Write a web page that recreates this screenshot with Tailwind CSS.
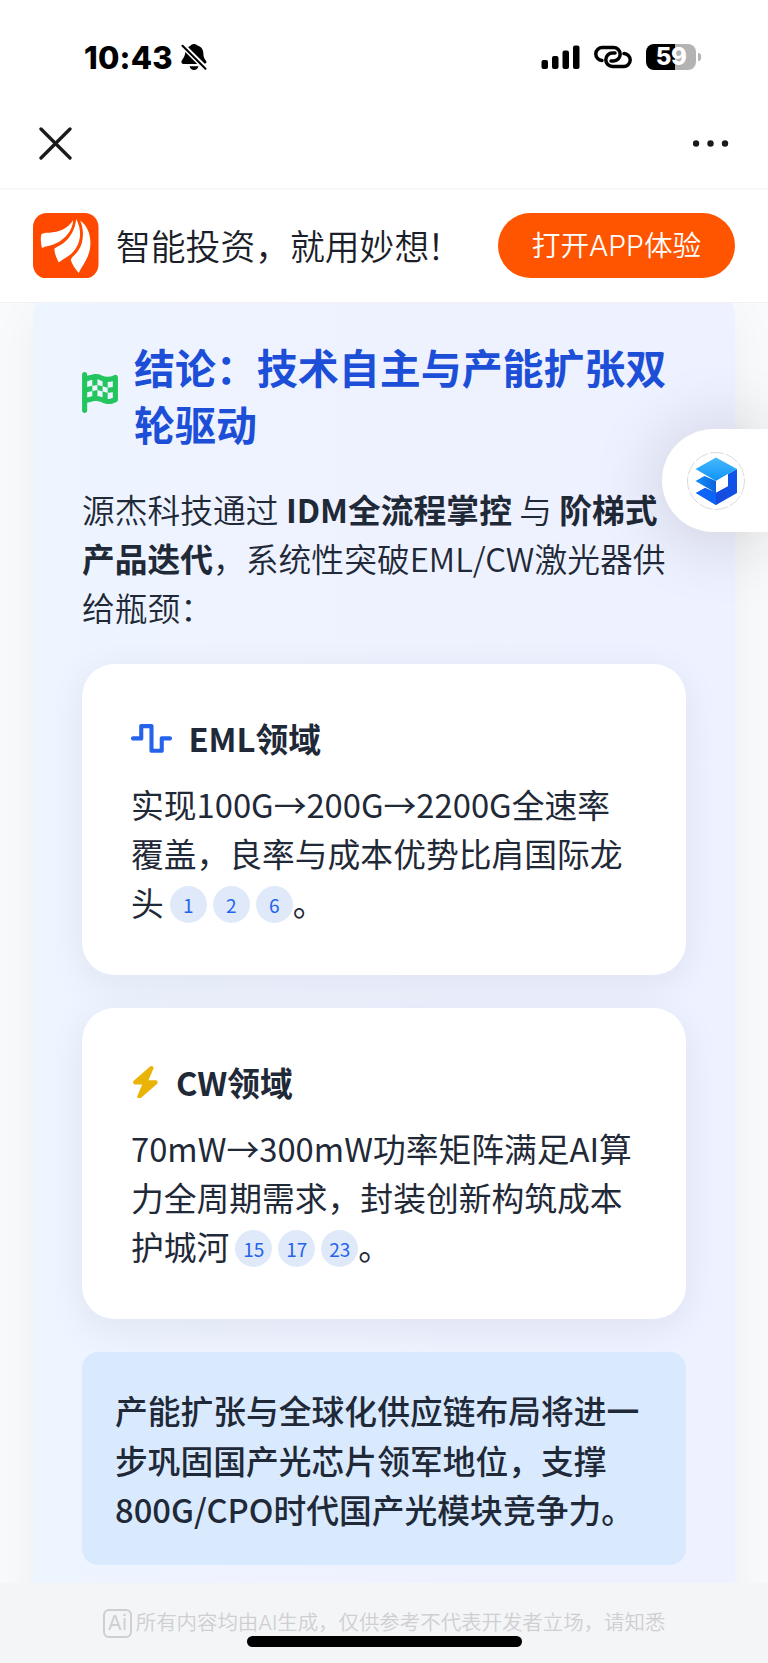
<!DOCTYPE html>
<html lang="zh-CN">
<head>
<meta charset="utf-8">
<title>结论</title>
<script src="https://cdn.jsdelivr.net/npm/@tailwindcss/browser@4"></script>
</head>
<body class="bg-[#f4f5f7] font-['Noto_Sans_CJK_SC',sans-serif] text-[#1f2937]">
<div class="relative flex h-[1663px] w-[768px] flex-col overflow-hidden">

  <!-- status bar -->
  <div class="flex h-[114px] shrink-0 items-center justify-between bg-white pr-[67px] pl-[84px]">
    <div class="flex items-center gap-[8px] text-black">
      <span class="pt-px font-['Inter',sans-serif] text-[31px] leading-none font-extrabold tracking-[0.200px]">10:43</span>
      <svg class="h-[26px] w-[26px]" viewBox="0 0 26 26" fill="#000">
        <path d="M13 0c-1.800 0-2.800.9-3.200 1.600-1 .3-1.900.9-2.600 1.700L23.500 19.600c1.200 0 1.900-.6 1.900-1.600 0-1.800-3-3-3-8 0-4-1.900-7.300-6-8.400C15.900.8 14.800 0 13 0z"/>
        <path d="M4.300 8.100C4.100 13.500.4 15.800.4 18.100c0 1.300.9 2 2.200 2h13.600z"/>
        <path d="M8.500 22.300h9c-.6 2.200-2.200 3.700-4.500 3.700s-3.900-1.500-4.500-3.700z"/>
        <path d="M1.500 1.800l23 23" stroke="#000" stroke-width="2" stroke-linecap="round"/>
      </svg>
    </div>
    <div class="flex items-center">
      <svg class="h-[24px] w-[39px]" viewBox="0 0 39 24">
        <rect x="0.500" y="15" width="6.500" height="9" rx="2"/><rect x="11" y="11" width="6.500" height="13" rx="2"/><rect x="21.500" y="5.500" width="6.500" height="18.500" rx="2"/><rect x="32" y="0.500" width="6.500" height="23.500" rx="2"/>
      </svg>
      <svg class="ml-[14px] h-[24px] w-[38px]" viewBox="0 0 38 24" fill="none" stroke="#000" stroke-width="3.500" stroke-linecap="round">
        <path d="M8 15.500A6.400 6.400 0 0 1 8.500 2.600H19.500a6.700 6.700 0 0 1 0 13.400h-2.500"/>
        <path d="M30 8.600a6.400 6.400 0 0 1-.5 12.900H18.500a6.700 6.700 0 0 1 0-13.400h2.500"/>
      </svg>
      <div class="ml-[14px] flex h-[26px] w-[50px] items-center justify-center rounded-[8px] bg-linear-to-r from-black from-58% to-[#b3b3b3] to-58% font-['Inter',sans-serif] text-[24px] leading-none font-extrabold tracking-[-0.500px] text-white">59</div>
      <div class="ml-[2px] h-[8px] w-[3px] rounded-r-full bg-[#b3b3b3]"></div>
    </div>
  </div>

  <!-- navigation bar -->
  <div class="flex h-[76px] shrink-0 items-start justify-between border-b-2 border-[#f8f8f8] bg-white pr-[39px] pl-[39px]">
    <svg class="mt-[13px] h-[33px] w-[33px]" viewBox="0 0 33 33" stroke="#1a1a1a" stroke-width="3.300" stroke-linecap="round"><path d="M2 2l29 29M31 2L2 31"/></svg>
    <svg class="mt-[26px] h-[7px] w-[36px]" viewBox="0 0 36 7" fill="#1a1a1a"><circle cx="3" cy="3.500" r="3.200"/><circle cx="17.500" cy="3.500" r="3.200"/><circle cx="32" cy="3.500" r="3.200"/></svg>
  </div>

  <!-- open-in-app banner -->
  <div class="flex h-[113px] shrink-0 items-center border-b border-[#f1f1f3] bg-white px-[33px] pb-[1.500px]">
    <svg class="h-[65.500px] w-[65.500px]" viewBox="0 0 66 66">
      <rect width="66" height="66" rx="14" fill="#ff4800"/>
      <g fill="#fff">
        <path d="M40.500 7C37 13 30 18 20 19.500c-5 .8-9 .2-11.500 2-1.200 3.500-.5 9 .5 13.700C14 33 19 33 24.500 30 32 26 40 18 40.500 7z"/>
        <path d="M43.500 6C42.500 16 38 24.500 30.500 30.500c-4 2.800-7 3.500-9 5.500.3 5 2 9.500 4.500 14C30 46 36 44.500 41 38.500 48 30 50 18 43.500 6z"/>
        <path d="M47.500 7.500C52 18 51 30 45.500 38c-3 4-6 6-7.500 9 1.500 5 4.500 9 8 13.500C49 54 54.500 48 57 38 59.500 26 56.500 14 47.500 7.500z"/>
      </g>
    </svg>
    <span class="ml-[17.500px] text-[34.800px] leading-none font-[350] whitespace-nowrap text-[#1c1f29]">智能投资，就用妙<span class="tracking-[-2px]">想！</span></span>
    <div class="ml-auto flex h-[65.500px] w-[237px] items-center justify-center rounded-full bg-[#ff5500] pt-[2px] font-['Inter','Noto_Sans_CJK_SC',sans-serif] text-[28.700px] leading-none font-[350] tracking-[-0.100px] whitespace-nowrap text-white">打开APP体验</div>
  </div>

  <!-- report body -->
  <main class="flex h-[1280px] shrink-0 flex-col overflow-hidden bg-[#f9fafb] px-[33px]">
    <section class="-mt-[15px] flex h-[1400px] shrink-0 flex-col rounded-[28px] bg-linear-to-r from-[#edf5ff] via-[#eef3ff] via-25% to-[#eef1ff] px-[49px] pt-[49.500px] shadow-[0_20px_50px_rgba(0,0,0,0.050)]">
      <div class="flex items-center gap-[16px]">
        <svg class="-mt-[5px] h-[41px] w-[36px] shrink-0" viewBox="0 0 448 512" fill="#22c55e"><path d="M32 0C49.700 0 64 14.300 64 32V48l69-17.200c38.100-9.500 78.300-5.100 113.500 12.500c46.300 23.200 100.800 23.200 147.100 0l9.600-4.800C423.800 28.100 448 43.100 448 66.100V345.800c0 13.300-8.300 25.300-20.800 30l-34.700 13c-46.200 17.300-97.600 14.600-141.700-7.400c-37.900-19-81.300-23.700-122.500-13.400L64 384v96c0 17.700-14.300 32-32 32s-32-14.300-32-32V400 334 64 32C0 14.300 14.300 0 32 0zM64 187.100l64-13.900v65.500L64 252.600V318l48.800-12.200c5.100-1.300 10.100-2.400 15.200-3.300V238.700l38.900-8.400c8.300-1.800 16.700-2.500 25.100-2.100l0-64c13.600 .4 27.200 2.600 40.400 6.400l23.600 6.900v66.700l-41.700-12.300c-7.300-2.100-14.800-3.400-22.300-3.800v71.400c21.800 1.900 43.300 6.700 64 14.400V244.200l22.700 6.700c13.500 4 27.300 6.400 41.300 7.400V194c-7.800-.8-15.600-2.300-23.200-4.500l-40.800-12v-62c-13-3.800-25.800-8.800-38.200-15c-8.200-4.100-16.900-7-25.800-8.800v72.400c-13-.4-26 .8-38.700 3.600L128 173.200V98L64 114v73.100zM320 335.700c16.800 1.500 33.900-.7 50-6.800l14-5.200V251.900l-7.900 1.800c-18.400 4.300-37.300 5.700-56.100 4.500v77.400zm64-149.400V115.400c-20.900 6.100-42.400 9.100-64 9.100V194c13.900 1.400 28 .5 41.700-2.600l22.300-5.200z"/></svg>
        <h2 class="text-[40.960px] leading-[57.300px] font-bold whitespace-nowrap text-[#1d4ed8]">结论：技术自主与产能扩张双<br>轮驱动</h2>
      </div>
      <p class="mt-[32px] text-[32.770px] leading-[49.150px] font-[350] whitespace-nowrap">源杰科技通过 <strong class="font-bold">IDM全流程掌控</strong> 与 <strong class="font-bold">阶梯式<br>产品迭代</strong>，系统性突破EML/CW激光器供<br>给瓶颈：</p>

      <div class="mt-[32.800px] flex h-[311px] shrink-0 flex-col rounded-[32.800px] bg-white p-[49px] shadow-[0_8px_36px_rgba(30,35,60,0.070)]">
        <div class="flex items-center gap-[16.400px]">
          <svg class="h-[32.800px] w-[41px] shrink-0" viewBox="0 0 640 512" fill="#2563eb"><path d="M128 64c0-17.700 14.300-32 32-32l160 0c17.700 0 32 14.300 32 32l0 352 96 0 0-160c0-17.700 14.300-32 32-32l128 0c17.700 0 32 14.300 32 32s-14.300 32-32 32l-96 0 0 160c0 17.700-14.300 32-32 32l-160 0c-17.700 0-32-14.300-32-32l0-352-96 0 0 160c0 17.700-14.300 32-32 32L32 288c-17.700 0-32-14.300-32-32s14.300-32 32-32l96 0 0-160z"/></svg>
          <h3 class="text-[32.770px] leading-[49.150px] font-bold">EML领域</h3>
        </div>
        <p class="mt-[16.400px] text-[32.770px] leading-[49.150px] font-normal whitespace-nowrap">实现100G→200G→2200G全速率<br>覆盖，良率与成本优势比肩国际龙<br>头<span class="ml-[6px] inline-flex gap-[6px] align-[3px] text-[19px] leading-none text-[#2563eb]"><span class="flex size-[37px] items-center justify-center rounded-full bg-[#dfe9fa]">1</span><span class="flex size-[37px] items-center justify-center rounded-full bg-[#dfe9fa]">2</span><span class="flex size-[37px] items-center justify-center rounded-full bg-[#dfe9fa]">6</span></span>。</p>
      </div>

      <div class="mt-[33px] flex h-[311px] shrink-0 flex-col rounded-[32.800px] bg-white p-[49px] shadow-[0_8px_36px_rgba(30,35,60,0.070)]">
        <div class="flex items-center gap-[16.400px]">
          <svg class="h-[32.800px] w-[28.700px] shrink-0" viewBox="0 0 448 512" fill="#eab308"><path d="M349.400 44.600c5.900-13.700 1.500-29.700-10.600-38.500s-28.600-8-39.900 1.800l-256 224c-10 8.800-13.600 22.900-8.900 35.300S50.700 288 64 288l111.500 0L98.600 467.400c-5.900 13.700-1.500 29.700 10.600 38.500s28.600 8 39.900-1.800l256-224c10-8.800 13.600-22.900 8.900-35.300s-16.600-20.700-30-20.700l-111.500 0L349.400 44.600z"/></svg>
          <h3 class="text-[32.770px] leading-[49.150px] font-bold">CW领域</h3>
        </div>
        <p class="mt-[16.400px] text-[32.770px] leading-[49.150px] font-normal whitespace-nowrap">70mW→300mW功率矩阵满足AI算<br>力全周期需求，封装创新构筑成本<br>护城河<span class="ml-[6px] inline-flex gap-[6px] align-[3px] text-[19px] leading-none text-[#2563eb]"><span class="flex size-[37px] items-center justify-center rounded-full bg-[#dfe9fa]">15</span><span class="flex size-[37px] items-center justify-center rounded-full bg-[#dfe9fa]">17</span><span class="flex size-[37px] items-center justify-center rounded-full bg-[#dfe9fa]">23</span></span>。</p>
      </div>

      <div class="mt-[33px] h-[213px] shrink-0 rounded-[16px] bg-[#daeafe] p-[33px]">
        <p class="text-[32.770px] leading-[49.150px] font-medium whitespace-nowrap">产能扩张与全球化供应链布局将进一<br>步巩固国产光芯片领军地位，支撑<br>800G/CPO时代国产光模块竞争力。</p>
      </div>
    </section>
  </main>

  <!-- disclaimer -->
  <footer class="flex grow items-center justify-center gap-[4px] bg-[#f4f5f7] font-['Inter','Noto_Sans_CJK_SC',sans-serif] text-[20.500px] leading-none whitespace-nowrap text-[#cfcfd1]">
    <span class="flex size-[29px] items-center justify-center rounded-[6px] border-2 border-[#cfcfd1]">Ai</span>
    <span class="pt-px font-[350] tracking-[-0.080px]">所有内容均由AI生成，仅供参考不代表开发者立场，请知悉</span>
  </footer>

  <!-- floating assistant button -->
  <div class="absolute top-[429px] right-0 flex h-[103px] w-[106.500px] items-center rounded-l-full bg-white pl-[25px] shadow-[0_4px_72px_rgba(20,25,40,0.180)]">
    <svg class="h-[58px] w-[58px]" viewBox="0 0 58 58">
      <defs>
        <linearGradient id="top" x1="0" y1="0" x2="0" y2="1"><stop offset="0" stop-color="#46b9fb"/><stop offset="1" stop-color="#1093f8"/></linearGradient>
        <linearGradient id="mid" x1="0" y1="0" x2="1" y2="0"><stop offset="0" stop-color="#1290fb"/><stop offset="1" stop-color="#0a63d8"/></linearGradient>
        <linearGradient id="side" x1="0" y1="1" x2="1" y2="0"><stop offset="0" stop-color="#1746d4"/><stop offset="1" stop-color="#0f55ee"/></linearGradient>
      </defs>
      <circle cx="29" cy="29" r="28.500" fill="#fff" stroke="#d0d0d0" stroke-width="0.800" stroke-dasharray="14 2"/>
      <path d="M9 41l9-5 11 4.500L41 34V22l9-5v24L29 53z" fill="url(#side)"/>
      <path d="M9 41l9-5 11 5v12z" fill="#0b63f8"/>
      <path d="M8.500 29l9-5L29 29v12z" fill="url(#mid)"/>
      <path d="M29 5.500L50 17 29 29 8.500 17z" fill="url(#top)"/>
      <path d="M29 29l12-7v12l-12 6.500z" fill="#fff"/>
    </svg>
  </div>

  <!-- home indicator -->
  <div class="absolute bottom-[16px] left-[247px] h-[11px] w-[275px] rounded-full bg-black"></div>
</div>
</body>
</html>
